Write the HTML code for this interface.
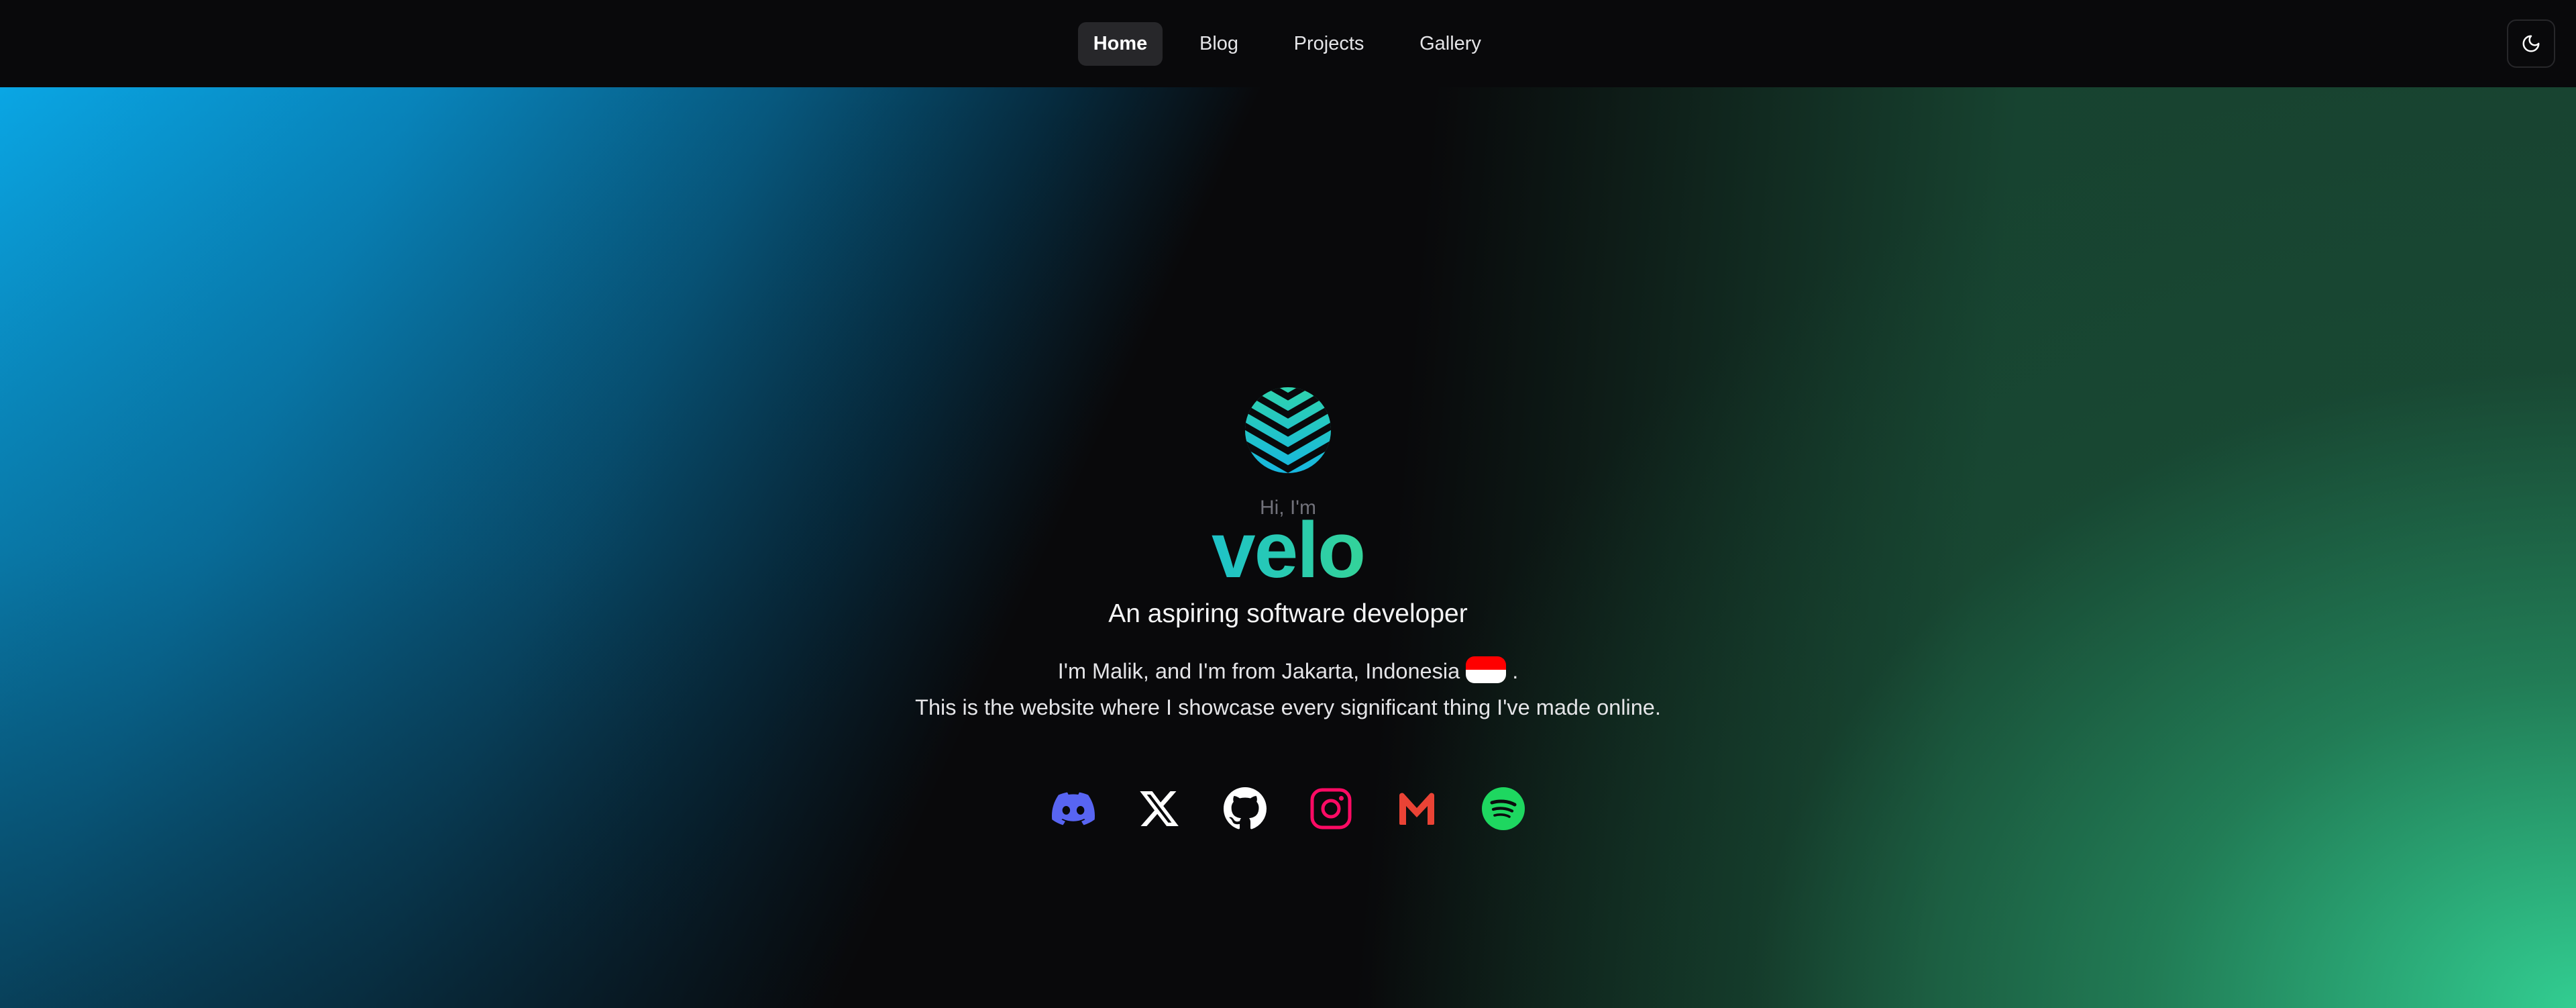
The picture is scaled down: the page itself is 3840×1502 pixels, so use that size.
<!DOCTYPE html>
<html><head><meta charset="utf-8"><style>
html,body{margin:0;padding:0}
body{width:3840px;height:1502px;overflow:hidden;background:#09090b;font-family:"Liberation Sans",sans-serif;position:relative}
.bg{position:absolute;left:0;top:130px;width:3840px;height:1372px;
background:
radial-gradient(ellipse 1800px 1400px at 100% 100%, rgba(50,205,145,1) 0%, rgba(36,140,96,.78) 35%, rgba(25,80,55,.35) 68%, rgba(9,9,11,0) 100%),
linear-gradient(95deg, rgba(9,9,11,0) 54%, rgba(24,70,50,.95) 76%, rgba(26,74,53,.9) 100%),
linear-gradient(to bottom, rgba(9,9,11,0) 0%, rgba(9,9,11,.2) 50%, rgba(9,9,11,.55) 100%),
linear-gradient(115deg, #0aa6e4 0%, #0884bb 14%, #07587e 26%, #062c40 35%, rgba(9,9,11,0) 42%),
#09090b;}
nav{position:absolute;left:0;top:0;width:3840px;height:130px;background:#09090b}
.nl{position:absolute;top:33px;height:65px;line-height:65px;font-size:29px;color:#e4e4e7;transform:translateX(-50%)}
.home{left:1670px;width:126px;text-align:center;background:#27272a;border-radius:12px;color:#fff;font-weight:bold}
.theme{position:absolute;left:3737px;top:29px;width:68px;height:68px;border:2px solid #27272a;border-radius:14px;display:flex;align-items:center;justify-content:center}
.c{position:absolute;left:0;width:3840px;text-align:center}
.icons{position:absolute;top:1173px;left:0;width:3840px}
.icons svg{position:absolute;width:64px;height:64px}
</style></head><body>
<div class="bg"></div>
<nav>
<div class="nl home">Home</div>
<div class="nl" style="left:1817px">Blog</div>
<div class="nl" style="left:1981px">Projects</div>
<div class="nl" style="left:2162px">Gallery</div>
<div class="theme"><svg width="30" height="30" viewBox="0 0 24 24" fill="none" stroke="#fff" stroke-width="2" stroke-linecap="round" stroke-linejoin="round"><path d="M12 3a6 6 0 0 0 9 9 9 9 0 1 1-9-9Z"/></svg></div>
</nav>

<svg style="position:absolute;left:1856px;top:577px" width="128" height="128" viewBox="0 0 128 128">
<defs><clipPath id="cc"><circle cx="64" cy="64" r="64"/></clipPath>
<linearGradient id="lg" x1="0" y1="0" x2="0" y2="1"><stop offset="0" stop-color="#2fd3ad"/><stop offset="1" stop-color="#16b6e0"/></linearGradient></defs>
<g clip-path="url(#cc)"><rect width="128" height="128" fill="url(#lg)"/>
<g fill="none" stroke="#09090b" stroke-width="10">
<polyline points="-40,-20 64,40 168,-20" transform="translate(0,-26)"/>
<polyline points="-40,-20 64,40 168,-20" transform="translate(0,1)"/>
<polyline points="-40,-20 64,40 168,-20" transform="translate(0,28)"/>
<polyline points="-40,-20 64,40 168,-20" transform="translate(0,55)"/>
<polyline points="-40,-20 64,40 168,-20" transform="translate(0,82)"/>
</g></g></svg>

<div class="c" style="top:740px;font-size:30px;color:#71717a">Hi, I'm</div>
<div class="c" style="top:752px;font-size:118px;font-weight:bold;letter-spacing:-2px"><span style="background:linear-gradient(90deg,#1ec2c8,#34d399);-webkit-background-clip:text;background-clip:text;color:transparent">velo</span></div>
<div class="c" style="top:893px;font-size:39px;color:#f4f4f5">An aspiring software developer</div>
<div class="c" style="top:973px;font-size:32.5px;line-height:54px;color:#e4e4e7">I'm Malik, and I'm from Jakarta, Indonesia <span style="display:inline-block;width:60px;height:40px;border-radius:13px;overflow:hidden;vertical-align:-7px;background:linear-gradient(#ff0000 50%,#fff 50%)"></span> .<br>This is the website where I showcase every significant thing I've made online.</div>

<div class="icons">
<svg style="left:1568px" viewBox="0 0 24 24"><path fill="#5865F2" d="M20.317 4.37a19.79 19.79 0 0 0-4.885-1.515.074.074 0 0 0-.079.037c-.21.375-.444.864-.608 1.25a18.27 18.270 0 0 0-5.487 0 12.64 12.64 0 0 0-.617-1.25.077.077 0 0 0-.079-.037A19.74 19.74 0 0 0 3.677 4.37a.07.07 0 0 0-.032.027C.533 9.046-.32 13.58.099 18.057a.082.082 0 0 0 .031.057 19.9 19.9 0 0 0 5.993 3.03.078.078 0 0 0 .084-.028c.462-.63.874-1.295 1.226-1.994a.076.076 0 0 0-.041-.106 13.1 13.1 0 0 1-1.872-.892.077.077 0 0 1-.008-.128c.126-.094.252-.192.372-.292a.074.074 0 0 1 .077-.01c3.928 1.793 8.18 1.793 12.062 0a.074.074 0 0 1 .078.01c.12.098.246.198.373.292a.077.077 0 0 1-.006.127 12.3 12.3 0 0 1-1.873.892.077.077 0 0 0-.041.107c.36.698.772 1.362 1.225 1.993a.076.076 0 0 0 .084.028 19.84 19.84 0 0 0 6.002-3.03.077.077 0 0 0 .032-.054c.5-5.177-.838-9.674-3.549-13.66a.061.061 0 0 0-.031-.03zM8.02 15.33c-1.183 0-2.157-1.085-2.157-2.419 0-1.333.956-2.419 2.157-2.419 1.21 0 2.176 1.096 2.157 2.42 0 1.333-.956 2.418-2.157 2.418zm7.975 0c-1.183 0-2.157-1.085-2.157-2.419 0-1.333.955-2.419 2.157-2.419 1.21 0 2.176 1.096 2.157 2.42 0 1.333-.946 2.418-2.157 2.418z"/></svg>
<svg style="left:1696px" viewBox="0 0 24 24"><path fill="#fff" d="M18.244 2.25h3.308l-7.227 8.26 8.502 11.24H16.17l-5.214-6.817L4.99 21.75H1.68l7.73-8.835L1.254 2.25H8.08l4.713 6.231zm-1.161 17.52h1.833L7.084 4.126H5.117z"/></svg>
<svg style="left:1824px" viewBox="0 0 16 16"><path fill="#fff" d="M8 0C3.58 0 0 3.58 0 8c0 3.540 2.29 6.53 5.47 7.59.4.07.55-.17.55-.38 0-.19-.01-.82-.01-1.490-2.01.37-2.53-.49-2.69-.94-.09-.23-.48-.94-.82-1.13-.28-.15-.68-.52-.01-.53.63-.01 1.08.58 1.23.82.72 1.21 1.87.87 2.33.66.07-.52.28-.87.51-1.07-1.780-.2-3.640-.89-3.640-3.95 0-.87.31-1.59.82-2.15-.08-.2-.36-1.02.08-2.12 0 0 .67-.21 2.2.82.64-.18 1.32-.27 2-.27.68 0 1.36.09 2 .27 1.53-1.04 2.2-.82 2.2-.82.44 1.1.16 1.92.08 2.12.51.56.82 1.27.82 2.15 0 3.07-1.87 3.75-3.65 3.95.29.25.54.73.54 1.48 0 1.07-.01 1.93-.01 2.2 0 .21.15.46.55.38A8.013 8.013 0 0016 8c0-4.42-3.58-8-8-8z"/></svg>
<svg style="left:1952px" viewBox="0 0 64 64"><rect x="4" y="4" width="56" height="56" rx="15" fill="none" stroke="#ff0a64" stroke-width="5"/><circle cx="32" cy="32" r="12" fill="none" stroke="#ff0a64" stroke-width="5"/><circle cx="47.5" cy="16.5" r="3.5" fill="#ff0a64"/></svg>
<svg style="left:2080px" viewBox="0 0 64 64"><path fill="#ea4335" d="M6 12a4 4 0 0 1 7-2l19 21 19-21a4 4 0 0 1 7 2v42a2 2 0 0 1-2 2H48V28L32 45 16 28v28H8a2 2 0 0 1-2-2z"/></svg>
<svg style="left:2209px" viewBox="0 0 64 64"><circle cx="32" cy="32" r="32" fill="#1ed760"/><g fill="none" stroke="#0b0b0d" stroke-linecap="round"><path d="M15 23c11-3.5 24-2.5 34 3" stroke-width="5"/><path d="M17 33c9-2.8 20-1.8 28 2.5" stroke-width="4.3"/><path d="M19 42c7.5-2 16-1.4 22 2" stroke-width="3.6"/></g></svg>
</div>
</body></html>
